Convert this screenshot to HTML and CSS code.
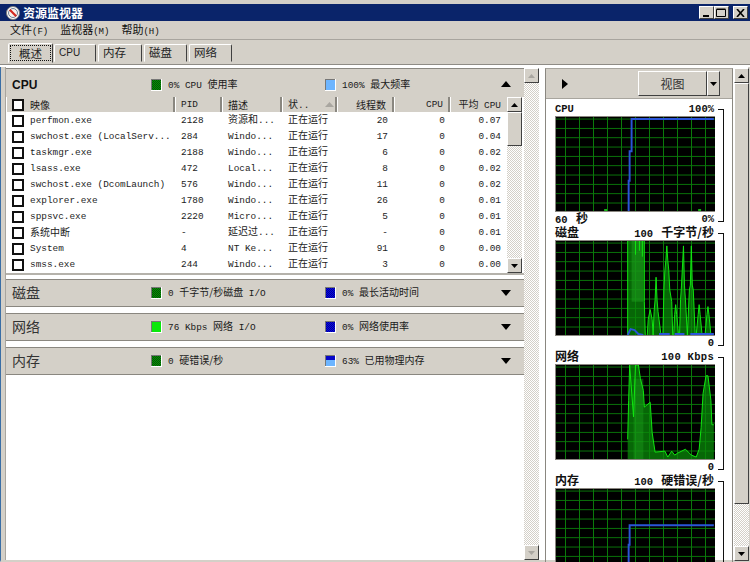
FILE: index.html
```html
<!DOCTYPE html>
<html lang="zh-CN">
<head>
<meta charset="utf-8">
<title>资源监视器</title>
<link rel="stylesheet" href="styles.css">
</head>
<body>
<div class="window">
  <header class="titlebar">
    <svg class="appicon" width="14" height="14" viewBox="0 0 14 14"><circle cx="7" cy="7" r="6.5" fill="#fff" stroke="#7d7d7d"/><circle cx="7" cy="7" r="4.5" fill="#f7f3ee" stroke="#6f7f95"/><path d="M3.800 3.800L10.200 10.200" fill="none" stroke="#d22a20" stroke-width="2.200"/></svg>
    <span class="title">资源监视器</span>
    <div class="winbtns">
      <span class="wbtn"><svg width="9" height="9" viewBox="0 0 9 9"><path d="M1 7h6v2H1z"/></svg></span>
      <span class="wbtn"><svg width="11" height="9" viewBox="0 0 11 9"><path d="M.5 1.5h9v7h-9zM.5 1h9" fill="none" stroke="#000"/></svg></span>
      <span class="wbtn close"><svg width="9" height="8" viewBox="0 0 9 8"><path d="M1 0l7 8M8 0L1 8" fill="none" stroke="#000" stroke-width="1.600"/></svg></span>
    </div>
  </header>
  <nav class="menu">
    <span>文件<small>(F)</small></span><span>监视器<small>(M)</small></span><span>帮助<small>(H)</small></span>
  </nav>
  <div class="tabs">
    <span class="tab active"><span class="focus">概述</span></span>
    <span class="tab w42 latin">CPU</span>
    <span class="tab w44">内存</span>
    <span class="tab w43">磁盘</span>
    <span class="tab w43">网络</span>
  </div>
  <main class="main">
    <section class="left">
      <div class="stack">
        <div class="sec open">
          <div class="sechead">
            <b class="secname latin">CPU</b>
            <span class="leg l1"><i class="sw sw-dg"></i><span>0% CPU <em>使用率</em></span></span>
            <span class="leg l2"><i class="sw sw-lb"></i><span>100% <em>最大频率</em></span></span>
            <svg class="caret" width="10" height="6" viewBox="0 0 10 6"><path d="M5 0l5 6H0z"/></svg>
          </div>
          <div class="tablewrap">
            <div class="table">
              <div class="row hrow">
                <span class="c1"><i class="cb"></i><em>映像</em></span><span class="lead">PID</span><span class="lead"><em>描述</em></span><span class="lead sort"><span><em>状</em>..</span><svg width="9" height="5" viewBox="0 0 9 5"><path d="M4.500 0L9 5H0z" fill="#a9a6a0"/></svg></span><span class="num n1"><em>线程数</em></span><span class="num n2">CPU</span><span class="num n3"><span><em>平均</em>&nbsp;CPU</span></span>
              </div>
              <div class="row"><span class="c1"><i class="cb"></i>perfmon.exe</span><span class="lead">2128</span><span class="lead"><em>资源和</em>...</span><span class="lead"><em>正在运行</em></span><span class="num n1">20</span><span class="num n2">0</span><span class="num n3">0.07</span></div>
              <div class="row"><span class="c1"><i class="cb"></i>swchost.exe (LocalServ...</span><span class="lead">284</span><span class="lead">Windo...</span><span class="lead"><em>正在运行</em></span><span class="num n1">17</span><span class="num n2">0</span><span class="num n3">0.04</span></div>
              <div class="row"><span class="c1"><i class="cb"></i>taskmgr.exe</span><span class="lead">2188</span><span class="lead">Windo...</span><span class="lead"><em>正在运行</em></span><span class="num n1">6</span><span class="num n2">0</span><span class="num n3">0.02</span></div>
              <div class="row"><span class="c1"><i class="cb"></i>lsass.exe</span><span class="lead">472</span><span class="lead">Local...</span><span class="lead"><em>正在运行</em></span><span class="num n1">8</span><span class="num n2">0</span><span class="num n3">0.02</span></div>
              <div class="row"><span class="c1"><i class="cb"></i>swchost.exe (DcomLaunch)</span><span class="lead">576</span><span class="lead">Windo...</span><span class="lead"><em>正在运行</em></span><span class="num n1">11</span><span class="num n2">0</span><span class="num n3">0.02</span></div>
              <div class="row"><span class="c1"><i class="cb"></i>explorer.exe</span><span class="lead">1780</span><span class="lead">Windo...</span><span class="lead"><em>正在运行</em></span><span class="num n1">26</span><span class="num n2">0</span><span class="num n3">0.01</span></div>
              <div class="row"><span class="c1"><i class="cb"></i>sppsvc.exe</span><span class="lead">2220</span><span class="lead">Micro...</span><span class="lead"><em>正在运行</em></span><span class="num n1">5</span><span class="num n2">0</span><span class="num n3">0.01</span></div>
              <div class="row"><span class="c1"><i class="cb"></i><em>系统中断</em></span><span class="lead">-</span><span class="lead"><em>延迟过</em>...</span><span class="lead"><em>正在运行</em></span><span class="num n1">-</span><span class="num n2">0</span><span class="num n3">0.01</span></div>
              <div class="row"><span class="c1"><i class="cb"></i>System</span><span class="lead">4</span><span class="lead">NT Ke...</span><span class="lead"><em>正在运行</em></span><span class="num n1">91</span><span class="num n2">0</span><span class="num n3">0.00</span></div>
              <div class="row"><span class="c1"><i class="cb"></i>smss.exe</span><span class="lead">244</span><span class="lead">Windo...</span><span class="lead"><em>正在运行</em></span><span class="num n1">3</span><span class="num n2">0</span><span class="num n3">0.00</span></div>
            </div>
            <div class="vscroll inner">
              <span class="sbtn"><svg width="7" height="4" viewBox="0 0 7 4"><path d="M3.500 0L7 4H0z"/></svg></span>
              <span class="thumb t-inner"></span>
              <span class="track"></span>
              <span class="sbtn"><svg width="7" height="4" viewBox="0 0 7 4"><path d="M0 0h7L3.500 4z"/></svg></span>
            </div>
          </div>
        </div>
        <div class="sec">
          <div class="sechead">
            <span class="secname cjk">磁盘</span>
            <span class="leg l1"><i class="sw sw-dg"></i><span>0 <em>千字节/秒磁盘</em> I/O</span></span>
            <span class="leg l2"><i class="sw sw-db"></i><span>0% <em>最长活动时间</em></span></span>
            <svg class="caret" width="10" height="6" viewBox="0 0 10 6"><path d="M0 0h10L5 6z"/></svg>
          </div>
        </div>
        <div class="sec">
          <div class="sechead">
            <span class="secname cjk">网络</span>
            <span class="leg l1"><i class="sw sw-g"></i><span>76 Kbps <em>网络</em> I/O</span></span>
            <span class="leg l2"><i class="sw sw-db"></i><span>0% <em>网络使用率</em></span></span>
            <svg class="caret" width="10" height="6" viewBox="0 0 10 6"><path d="M0 0h10L5 6z"/></svg>
          </div>
        </div>
        <div class="sec">
          <div class="sechead">
            <span class="secname cjk">内存</span>
            <span class="leg l1"><i class="sw sw-dg"></i><span>0 <em>硬错误/秒</em></span></span>
            <span class="leg l2"><i class="sw sw-mix"></i><span>63% <em>已用物理内存</em></span></span>
            <svg class="caret" width="10" height="6" viewBox="0 0 10 6"><path d="M0 0h10L5 6z"/></svg>
          </div>
        </div>
      </div>
      <div class="vscroll outer">
        <span class="sbtn"><svg width="7" height="4" viewBox="0 0 7 4"><path d="M3.500 0L7 4H0z" fill="#a9a6a0"/></svg></span>
        <span class="track"></span>
        <span class="sbtn"><svg width="7" height="4" viewBox="0 0 7 4"><path d="M0 0h7L3.500 4z" fill="#a9a6a0"/></svg></span>
      </div>
    </section>
    <section class="right">
      <div class="graphs">
        <div class="toolbar">
          <svg class="play" width="6" height="10" viewBox="0 0 6 10"><path d="M0 0l6 5-6 5z"/></svg>
          <span class="viewbtn"><em>视图</em></span><span class="viewdrop"><svg width="7" height="4" viewBox="0 0 7 4"><path d="M0 0h7L3.500 4z"/></svg></span>
        </div>
        <div class="gblock">
          <div class="gcap"><b>CPU</b><b>100%</b></div>
          <svg class="chart" width="160" height="96" viewBox="0 0 160 96">
            <path d="M48 94h3v2h-3zM144 94h3v2h-3z" fill="#17b317"/>
            <path d="M73 96V65h1V35h2V2h84" fill="none" stroke="#2a55d8" stroke-width="2"/>
          </svg>
          <div class="gfoot"><b>60 <em>秒</em></b><b>0%</b></div>
        </div>
        <div class="gblock">
          <div class="gcap"><b><em>磁盘</em></b><b>100 <em>千字节/秒</em></b></div>
          <svg class="chart" width="160" height="96" viewBox="0 0 160 96">
            <path d="M72 96V0H89V62L90 96ZM92 96L93 80 95 70 97 80 98 96 99 72 100 60 101 37 102 60 103 72 106 96ZM108 96L109 50 110 30 111 20 112 5 113 20 114 30 115 50 117 62 118 96ZM119 96L120 75 121 65 122 75 124 96ZM125 96L126 60 127 45 129 5 130 45 131 60 133 96 135 50 136 45 137 5 138 45 139 50 141 96ZM142 96L144 75 145 65 146 75 148 96ZM151 96L153 75 154 67 155 75 157 96Z" fill="#0a8a0a" opacity=".75"/>
            <path d="M76 0H88V62H76Z" fill="#1fa01f" opacity=".5"/>
            <path d="M72 0V96M80 0V14M84 0V10M87 0V16M89 0V62L90 96M92 96L93 80 95 70 97 80 98 96 99 72 100 60 101 37 102 60 103 72 106 96M108 96L109 50 110 30 111 20 112 5 113 20 114 30 115 50 117 62 118 96M119 96L120 75 121 65 122 75 124 96M125 96L126 60 127 45 129 5 130 45 131 60 133 96 135 50 136 45 137 5 138 45 139 50 141 96M142 96L144 75 145 65 146 75 148 96M151 96L153 75 154 67 155 75 157 96" fill="none" stroke="#10e810" stroke-width="1"/>
            <path d="M72 96L75 90 79 91 83 95 88 96M104 95H115M120 95H130M136 95H160" fill="none" stroke="#2a55d8" stroke-width="2"/>
          </svg>
          <div class="gfoot"><b></b><b>0</b></div>
        </div>
        <div class="gblock">
          <div class="gcap"><b><em>网络</em></b><b class="spaced">100 Kbps</b></div>
          <svg class="chart" width="160" height="96" viewBox="0 0 160 96">
            <path d="M72 96V76L73 36 74 0H83L85 14 88 26 89 43 95 38 97 69 100 89 110 88 113 94 117 88 120 92 123 90 131 86 137 92 142 94 145 86 147 64 149 29 152 11 154 11 157 36 158 61H160V96Z" fill="#0a8a0a" opacity=".75"/>
            <path d="M78 14H88V96H78Z" fill="#1fa01f" opacity=".4"/>
            <path d="M72 76L73 36 74 0 78 53 80 0H83L85 14 88 26 89 43 95 38 97 69 100 89 110 88 113 94 117 88 120 92 123 90 131 86 137 92 142 94 145 86 147 64 149 29 152 11 154 11 157 36 158 61H160" fill="none" stroke="#10e810" stroke-width="1"/>
          </svg>
          <div class="gfoot"><b></b><b>0</b></div>
        </div>
        <div class="gblock last">
          <div class="gcap"><b><em>内存</em></b><b>100 <em>硬错误/秒</em></b></div>
          <svg class="chart" width="160" height="96" viewBox="0 0 160 96">
            <path d="M73 96V57h1V37h86" fill="none" stroke="#2a55d8" stroke-width="2"/>
          </svg>
        </div>
      </div>
      <div class="vscroll rs">
        <span class="sbtn"><svg width="7" height="4" viewBox="0 0 7 4"><path d="M3.500 0L7 4H0z"/></svg></span>
        <span class="thumb t-right"></span>
        <span class="track"></span>
        <span class="sbtn"><svg width="7" height="4" viewBox="0 0 7 4"><path d="M0 0h7L3.500 4z"/></svg></span>
      </div>
    </section>
  </main>
</div>
</body>
</html>
```
FILE: styles.css
```css
* { box-sizing: border-box; }
html, body { margin: 0; padding: 0; }
body {
  width: 750px; height: 562px; overflow: hidden; background: #d4d0c8;
  font-family: "Liberation Mono", "Noto Sans CJK SC", monospace;
  font-size: 9.4px; color: #1a1a1a;
}
em { font-style: normal; font-family: "Noto Sans CJK SC", sans-serif; font-size: 10px; letter-spacing: 0; line-height: 1; }
.window { width: 750px; height: 562px; display: flex; flex-direction: column; padding-top: 4px; background: #d4d0c8; }

.titlebar { height: 17px; flex: none; background: #0a246a; display: flex; align-items: center; padding: 0 2px 0 6px; }
.appicon { flex: none; }
.title { margin-left: 3px; color: #fff; font: bold 12px "Noto Sans CJK SC", sans-serif; }
.winbtns { margin-left: auto; display: flex; }
.wbtn {
  width: 15px; height: 13px; background: #d4d0c8; display: flex; align-items: center; justify-content: center;
  border: 1px solid; border-color: #fff #404040 #404040 #fff;
}
.wbtn.close { margin-left: 4px; }

.menu { height: 19px; flex: none; display: flex; padding: 0 0 0 10px; gap: 12px; border-bottom: 1px solid #a8a59e; font: 11px/17px "Noto Sans CJK SC", sans-serif; color: #111; }
.menu span { white-space: nowrap; }
.menu small { font: 9px "Liberation Mono", monospace; }

.tabs { height: 27px; flex: none; display: flex; align-items: flex-end; padding: 0 0 3px 8px; gap: 2px; border-bottom: 2px solid #fff; box-shadow: inset 0 -1px 0 #8f8c86; font: 11.5px/1 "Noto Sans CJK SC", sans-serif; }
.tab {
  height: 18px; width: 43px; display: flex; align-items: center; padding-left: 4px;
  border: 1px solid; border-color: #fff #404040 transparent #fff; border-radius: 2px 2px 0 0;
  color: #222;
}
.tab.active { height: 20px; width: 45px; margin-bottom: -1px; margin-right: -1px; background: #d4d0c8; padding-left: 1px; }
.focus { border: 1px dotted #111; padding: 1px 3px; width: 41px; height: 16px; text-align: center; line-height: 13px; }
.w42 { width: 42px; } .w44 { width: 44px; } .w43 { width: 43px; }
.latin { font-family: "Liberation Sans", sans-serif; font-size: 11px; }
.tab.latin { font-size: 10px; }

.main { flex: 1; min-height: 0; display: flex; background: #fff; border-left: 1px solid #3a6ea5; border-bottom: 2px solid #d4d0c8; }

.left { width: 540px; flex: none; display: flex; background: #fff; border-left: 4px solid #d4d0c8; box-shadow: inset 1px 0 0 #a8a59e; }
.stack { width: 519px; flex: none; display: flex; flex-direction: column; gap: 6px; padding: 1px 0 0 1px; }
.sec { background: #d4d0c8; border-top: 1px solid #8a8780; border-bottom: 1px solid #8a8780; box-shadow: inset 1px 0 0 #a8a59e, inset -1px 0 0 #a8a59e; }
.sec.open { border-bottom: 2px solid #b5b2ab; background: #fff; margin-bottom: -2px; }
.sechead { height: 26px; display: flex; align-items: center; position: relative; background: #d4d0c8; padding-left: 6px; }
.open .sechead { height: 28px; padding-top: 3px; }
.open .leg { top: 3px; }
.open .caret { top: 12px; }
.secname { font-size: 12px; color: #111; }
.secname.cjk { font: 14px "Noto Sans CJK SC", sans-serif; color: #333; margin-top: -3px; }
.leg { position: absolute; top: 0; bottom: 0; display: flex; align-items: center; gap: 6px; white-space: nowrap; }
.l1 { left: 145px; } .l2 { left: 319px; }
.sw { width: 11px; height: 12px; display: block; border-right: 1px solid #fff; border-bottom: 1px solid #fff; box-shadow: inset 1px 1px 0 #777; }
.sw-dg { background: repeating-conic-gradient(#0a8a0a 0 25%, #005a00 0 50%) 0 0 / 2px 2px; }
.sw-g { background: #0be80b; }
.sw-lb { background: #6db5ff; }
.sw-db { background: repeating-conic-gradient(#0808e0 0 25%, #00009a 0 50%) 0 0 / 2px 2px; }
.sw-mix { background: linear-gradient(#0606c8 0 45%, #6db5ff 45%); }
.caret { position: absolute; right: 13px; top: 10px; }

.tablewrap { display: flex; height: 176px; background: #fff; }
.table { width: 501px; flex: none; background: #fff; }
.row { display: grid; grid-template-columns: 169px 47px 60px 55px 57px 56px 57px; height: 16px; align-items: center; white-space: nowrap; color: #1c1c1c; }
.hrow { height: 15px; background: #d4d0c8; }
.hrow > span { height: 15px; border-right: 2px solid #8a8780; display: flex; align-items: center; box-shadow: inset 1px 0 0 #fff; }
.hrow > .num { justify-content: flex-end; }
.hrow > span:last-child { border-right: none; }
.c1 { display: flex; align-items: center; padding-left: 6px; }
.cb { flex: none; width: 12px; height: 12px; border: 2px solid #111; background: #fff; margin-right: 6px; }
.row .cb { margin-top: 1px; }
.lead { padding-left: 6px; }
.sort svg { margin-left: 16px; }
.num { text-align: right; }
.n1 { padding-right: 6px; }
.n2 { padding-right: 5px; }
.n3 { padding-right: 6px; }

.vscroll { display: flex; flex-direction: column; flex: none; width: 15px; }
.sbtn { height: 15px; flex: none; background: #d4d0c8; display: flex; align-items: center; justify-content: center; border: 1px solid; border-color: #fff #404040 #404040 #fff; }
.thumb { flex: none; background: #d4d0c8; border: 1px solid; border-color: #fff #404040 #404040 #fff; }
.track { flex: 1; background: repeating-conic-gradient(#d4d0c8 0 25%, #fff 0 50%) 0 0 / 2px 2px; }
.t-inner { height: 34px; }
.t-right { height: 421px; }
.outer { margin-top: 1px; height: 492px; }

.right { flex: 1; min-width: 0; display: flex; padding: 1px 2px 0 4px; background: #fff; gap: 1px; box-shadow: inset -2px 0 0 #d4d0c8; }
.graphs { width: 188px; flex: none; overflow: hidden; border-left: 1px solid #8a8780; border-right: 1px solid #8a8780; border-top: 1px solid #a8a59e; height: 497px; }
.rs { height: 493px; }
.toolbar { height: 30px; background: #d4d0c8; border-bottom: 1px solid #a8a59e; display: flex; align-items: center; padding-right: 12px; margin-bottom: 3px; }
.play { margin-left: 16px; margin-right: auto; }
.viewbtn, .viewdrop { height: 25px; display: flex; align-items: center; justify-content: center; background: #d4d0c8; border: 1px solid; border-color: #fff #404040 #404040 #fff; }
.viewbtn { width: 69px; color: #333; }
.viewbtn em { font-size: 12px; }
.viewdrop { width: 13px; }

.gblock { position: relative; width: 178px; padding-left: 9px; height: 124px; }
.gcap, .gfoot { display: flex; justify-content: space-between; width: 160px; height: 14px; line-height: 14px; font-size: 10.5px; color: #111; padding-right: 1px; }
.gcap em, .gfoot em { font-weight: bold; font-size: 12px; margin-left: 2px; }
.gcap b:first-child em { margin-left: 0; }
.spaced { letter-spacing: .3px; }
.chart { display: block; width: 160px; height: 96px; background-color: #000;
  background-image: linear-gradient(90deg, #0a7a0a 1px, transparent 1px), linear-gradient(#0a7a0a 1px, transparent 1px);
  background-size: 14px 100%, 100% 9.33px; background-position: 9px 0, 0 1.6px;
  border-top: 1px solid #8a8780; border-left: 1px solid #8a8780; border-bottom: 1px solid #8a8780; }
.gblock::after { content: ""; position: absolute; left: 172px; top: 7px; width: 5px; height: 111px; border: 1px solid #111; border-left: none; }
.gblock.last::after { height: 200px; }
```
